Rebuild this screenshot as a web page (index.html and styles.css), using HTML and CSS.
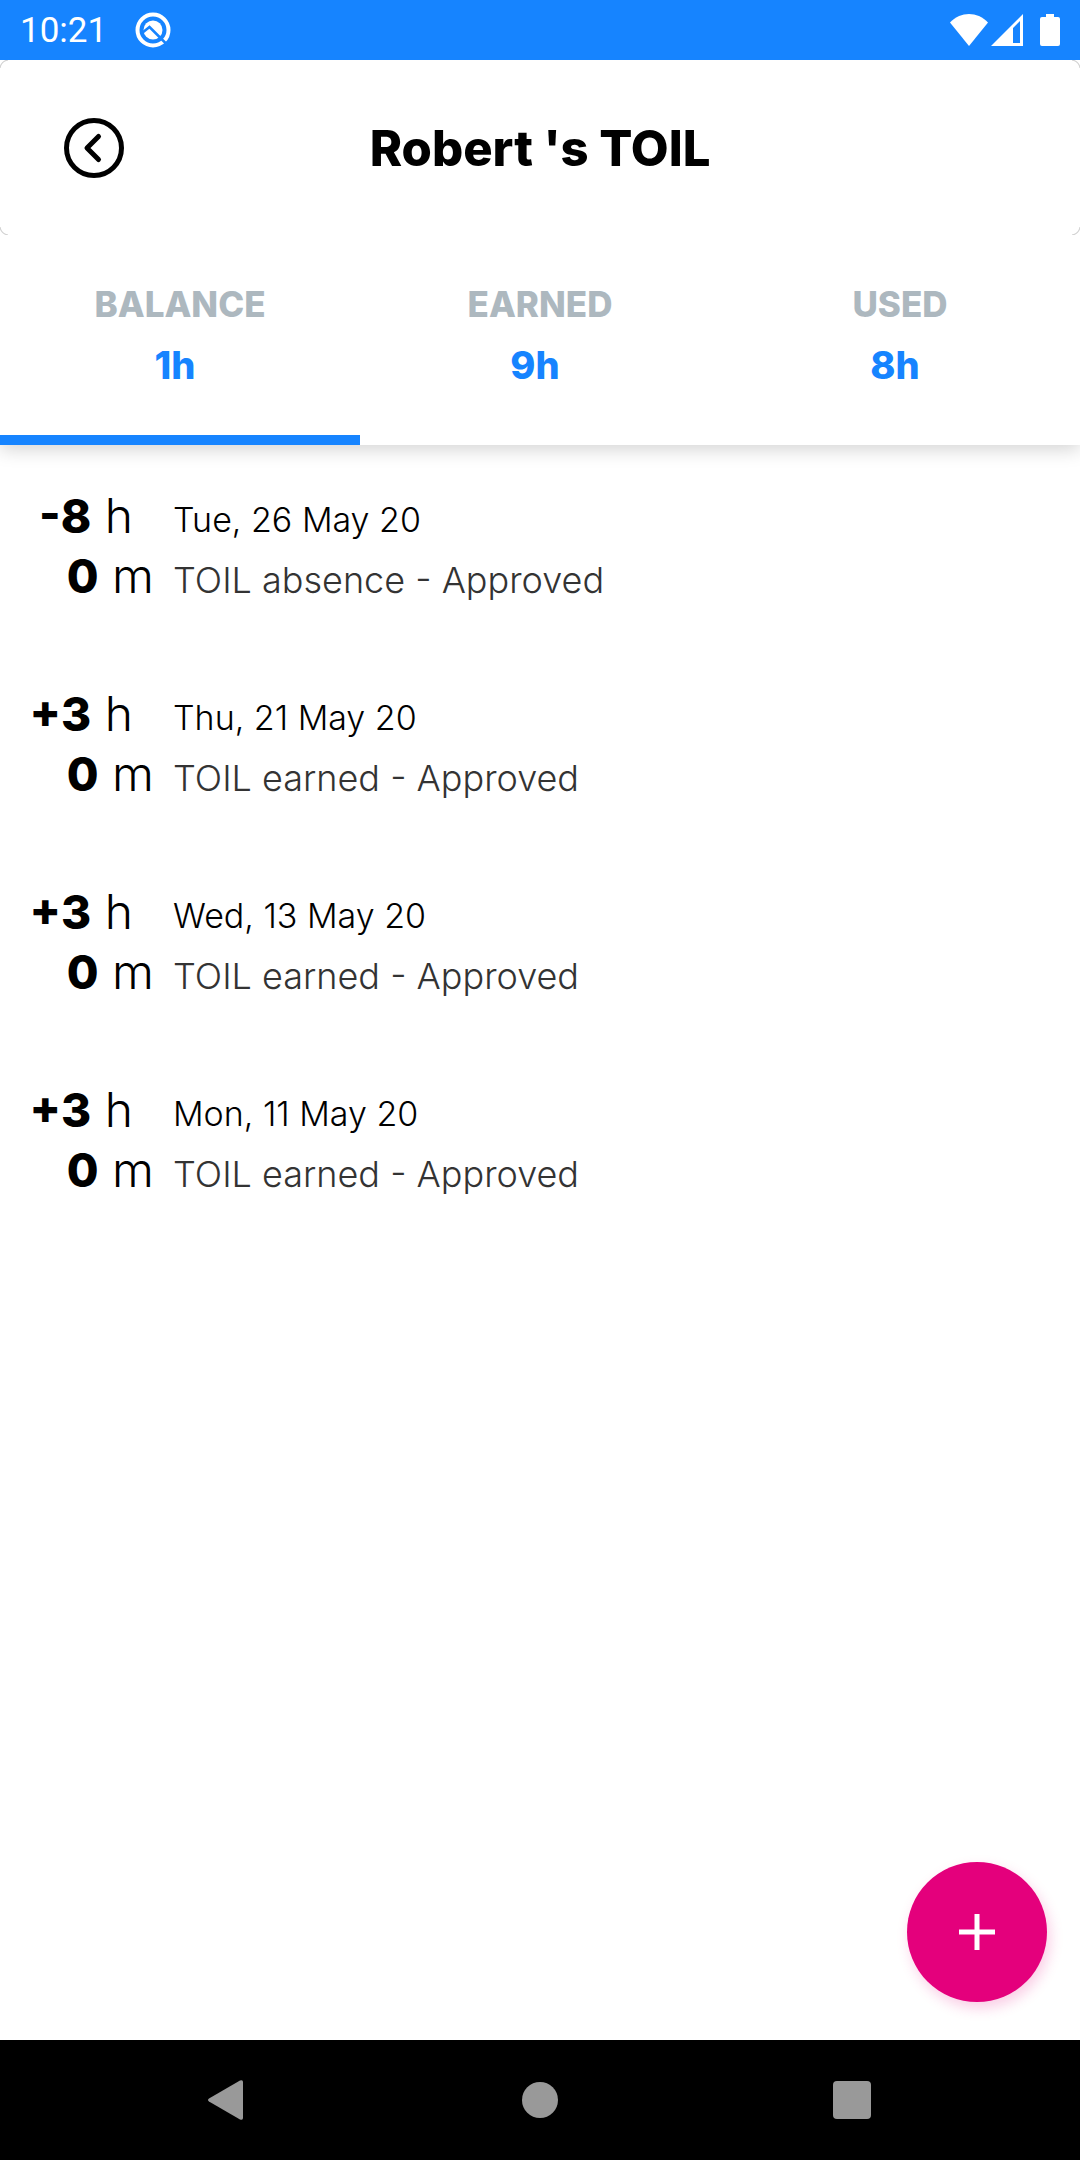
FILE: index.html
```html
<!DOCTYPE html>
<html lang="en">
<head>
<meta charset="utf-8">
<meta name="viewport" content="width=device-width, initial-scale=1">
<title>Robert 's TOIL</title>
<link rel="stylesheet" href="styles.css">
</head>
<body>
<div class="status-bar">
  <span class="clock">10:21</span>
  <svg class="status-app" width="36" height="36" viewBox="0 0 36 36" aria-hidden="true">
    <circle cx="18" cy="18" r="15.500" fill="none" stroke="#fff" stroke-width="4"/>
    <circle cx="18" cy="18" r="9.500" fill="#fff"/>
    <path d="M7 21L14.500 15L33 33.500" fill="none" stroke="#1684ff" stroke-width="2.500"/>
  </svg>
  <div class="status-icons">
    <svg width="38" height="32" viewBox="0 0 38 32" aria-hidden="true"><path d="M0 8.500C11 -2.800 27 -2.800 38 8.500L19 32Z" fill="#fff"/></svg>
    <svg width="32" height="32" viewBox="0 0 32 32" aria-hidden="true"><path fill-rule="evenodd" d="M0 32L32 0V32ZM22 14V29H29V7Z" fill="#fff"/></svg>
    <svg class="battery" width="20" height="32" viewBox="0 0 20 32" aria-hidden="true"><path d="M6 0H14V3H18Q20 3 20 5V30Q20 32 18 32H2Q0 32 0 30V5Q0 3 2 3H6Z" fill="#fff"/></svg>
  </div>
</div>

<header class="header">
  <button class="back" aria-label="Back">
    <svg width="60" height="60" viewBox="0 0 60 60" fill="none" stroke="#000" stroke-width="5" stroke-linecap="round" stroke-linejoin="round"><circle cx="30" cy="30" r="27.500"/><path d="M34.500 18.500L23 30L34.500 41.500"/></svg>
  </button>
  <h1 class="title">Robert 's TOIL</h1>
</header>

<nav class="tabs" aria-label="TOIL summary">
  <button class="tab tab-active"><span class="tab-label">BALANCE</span><span class="tab-value">1h</span></button>
  <button class="tab"><span class="tab-label">EARNED</span><span class="tab-value">9h</span></button>
  <button class="tab"><span class="tab-label">USED</span><span class="tab-value">8h</span></button>
</nav>

<main class="content">
  <ul class="entries">
    <li class="entry">
      <div class="amount"><span class="hours"><b>-8</b> h</span><span class="minutes"><b>0</b> m</span></div>
      <div class="details"><span class="date">Tue, 26 May 20</span><span class="state">TOIL absence - Approved</span></div>
    </li>
    <li class="entry">
      <div class="amount"><span class="hours"><b>+3</b> h</span><span class="minutes"><b>0</b> m</span></div>
      <div class="details"><span class="date">Thu, 21 May 20</span><span class="state">TOIL earned - Approved</span></div>
    </li>
    <li class="entry">
      <div class="amount"><span class="hours"><b>+3</b> h</span><span class="minutes"><b>0</b> m</span></div>
      <div class="details"><span class="date">Wed, 13 May 20</span><span class="state">TOIL earned - Approved</span></div>
    </li>
    <li class="entry">
      <div class="amount"><span class="hours"><b>+3</b> h</span><span class="minutes"><b>0</b> m</span></div>
      <div class="details"><span class="date">Mon, 11 May 20</span><span class="state">TOIL earned - Approved</span></div>
    </li>
  </ul>
  <button class="add" aria-label="Add entry">
    <svg width="36" height="36" viewBox="0 0 36 36" stroke="#fff" stroke-width="5"><path d="M18 0V36M0 18H36"/></svg>
  </button>
</main>

<div class="system-nav">
  <button class="system-key" aria-label="System back"><svg width="40" height="40" viewBox="0 0 40 40"><path d="M1 18.500L32 .6Q35 -.6 35 2V38Q35 40.600 32 39.400L1 21.500Q-1 20 1 18.500Z" fill="#999"/></svg></button>
  <button class="system-key" aria-label="Home"><svg width="40" height="40" viewBox="0 0 40 40"><circle cx="20" cy="20" r="18" fill="#999"/></svg></button>
  <button class="system-key" aria-label="Recent apps"><svg width="40" height="40" viewBox="0 0 40 40"><rect x="1" y="1" width="38" height="38" rx="4" fill="#999"/></svg></button>
</div>
</body>
</html>
```
FILE: styles.css
```css
* {
  box-sizing: border-box;
}

body {
  margin: 0;
  min-height: 100vh;
  display: flex;
  flex-direction: column;
  background: #fff;
  color: #000;
  font-family: Inter, "Liberation Sans", sans-serif;
}

button {
  border: 0;
  padding: 0;
  background: none;
  font: inherit;
  cursor: pointer;
}

svg {
  display: block;
}

.status-bar {
  display: flex;
  align-items: center;
  height: 60px;
  padding: 0 20px;
  background: #1684ff;
  color: #fff;
}

.clock {
  padding-top: 2px;
  font: 400 35px/58px Roboto, sans-serif;
}

.status-app {
  margin-left: 28px;
}

.status-icons {
  display: flex;
  gap: 3px;
  margin-left: auto;
}

.battery {
  margin-left: 14px;
}

.header {
  --corner: transparent 8px, #ccc 9px, transparent 10px;
  position: relative;
  z-index: 1;
  display: grid;
  grid-template-columns: 60px 1fr 60px;
  align-items: center;
  height: 175px;
  padding: 0 64px;
  background:
    radial-gradient(circle at 9px 9px, var(--corner)) left top / 8px 8px no-repeat,
    radial-gradient(circle at -1px 9px, var(--corner)) right top / 8px 8px no-repeat,
    radial-gradient(circle at 9px -1px, var(--corner)) left bottom / 8px 8px no-repeat,
    radial-gradient(circle at -1px -1px, var(--corner)) right bottom / 8px 8px no-repeat,
    #fff;
}

.title {
  margin: 0;
  padding-top: 2px;
  text-align: center;
  font-size: 49px;
  line-height: 60px;
  font-weight: 800;
}

.tabs {
  display: grid;
  grid-template-columns: repeat(3, 1fr);
  height: 210px;
  background: #fff;
  box-shadow: 0 4px 18px rgba(0, 0, 0, 0.18);
}

.tab {
  display: flex;
  flex-direction: column;
  align-items: center;
  padding-top: 39px;
  border-bottom: 10px solid transparent;
  font-weight: 800;
}

.tab-active {
  border-color: #1684ff;
}

.tab-label {
  color: #adb8bf;
  font-size: 35px;
  line-height: 60px;
}

.tab-value {
  padding-right: 10px;
  color: #1684ff;
  font-size: 38px;
  line-height: 62px;
}

.content {
  position: relative;
  flex: 1;
}

.entries {
  display: flex;
  flex-direction: column;
  gap: 74px;
  margin: 0;
  padding: 41px 24px;
  list-style: none;
}

.entry {
  display: flex;
  gap: 19px;
}

.amount,
.details {
  display: flex;
  flex-direction: column;
  line-height: 60px;
}

.amount {
  width: 130px;
  align-items: flex-end;
  font-size: 48px;
  font-weight: 300;
}

.amount b {
  font-size: 46px;
  font-weight: 800;
}

.hours {
  padding-right: 21px;
}

.details {
  padding-top: 4px;
  font-size: 34px;
  font-weight: 300;
}

.state {
  color: #333;
  font-size: 36px;
}

.add {
  position: absolute;
  right: 33px;
  bottom: 38px;
  display: grid;
  place-items: center;
  width: 140px;
  height: 140px;
  border-radius: 50%;
  background: #e4007c;
  box-shadow: 3px 6px 14px rgba(228, 0, 124, 0.2);
}

.system-nav {
  display: grid;
  grid-template-columns: repeat(3, 1fr);
  height: 120px;
  padding: 0 72px;
  background: #000;
}

.system-key {
  display: grid;
  place-items: center;
}
```
